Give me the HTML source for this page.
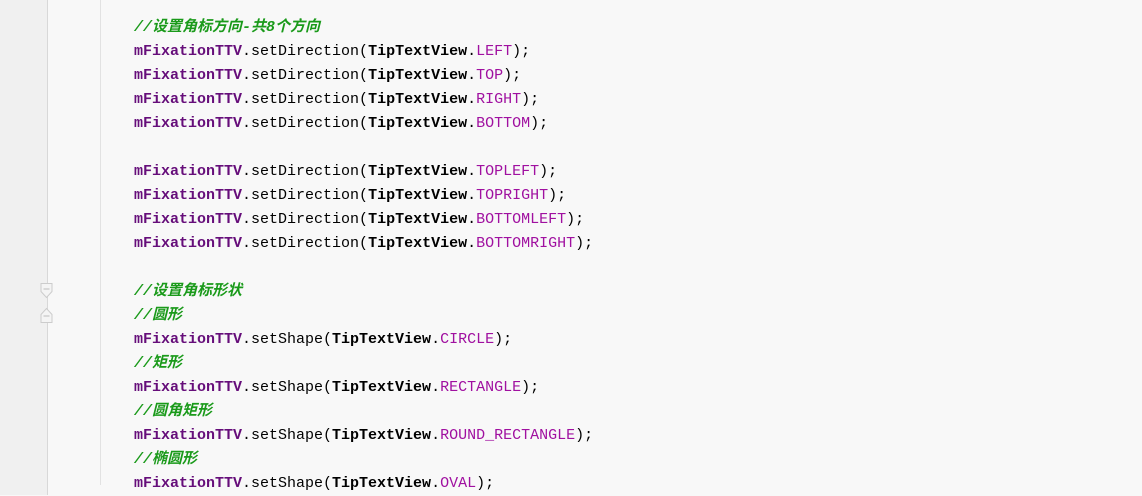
<!DOCTYPE html>
<html><head><meta charset="utf-8"><style>
html,body{margin:0;padding:0}
body{width:1142px;height:495px;background:#f8f8f8;position:relative;overflow:hidden;font-family:"Liberation Mono","Noto Sans CJK SC",monospace;font-size:15px}
.gut{position:absolute;left:0;top:0;width:47px;height:495px;background:#f0f0f0;border-right:1px solid #d8d8d8}
.guide{position:absolute;left:100px;top:0;width:1px;height:485px;background:#e2e2e2}
.code{position:absolute;left:134px;top:16px;color:#000}
.code div{height:24px;line-height:24px;white-space:pre;overflow:visible}
.c{color:#1a9a1a;font-weight:bold;font-style:italic}
.f{color:#660e7a;font-weight:bold}
.k{color:#a010a0}
.b{font-weight:bold}
</style></head><body>
<div class="gut"></div>
<svg style="position:absolute;left:40px;top:283px" width="14" height="40"><path d="M1 0.5h11v8l-5.5 6l-5.5-6z" fill="#f4f4f4" stroke="#ccc"/><path d="M3.5 6h6" stroke="#bbb"/><path d="M1 39.5h11v-8l-5.5-6l-5.5 6z" fill="#f4f4f4" stroke="#ccc"/><path d="M3.5 33h6" stroke="#bbb"/></svg>
<div class="guide"></div>
<div class="code">
<div><span class="c">//设置角标方向-共8个方向</span></div>
<div><span class="f">mFixationTTV</span>.setDirection(<span class="b">TipTextView</span>.<span class="k">LEFT</span>);</div>
<div><span class="f">mFixationTTV</span>.setDirection(<span class="b">TipTextView</span>.<span class="k">TOP</span>);</div>
<div><span class="f">mFixationTTV</span>.setDirection(<span class="b">TipTextView</span>.<span class="k">RIGHT</span>);</div>
<div><span class="f">mFixationTTV</span>.setDirection(<span class="b">TipTextView</span>.<span class="k">BOTTOM</span>);</div>
<div></div>
<div><span class="f">mFixationTTV</span>.setDirection(<span class="b">TipTextView</span>.<span class="k">TOPLEFT</span>);</div>
<div><span class="f">mFixationTTV</span>.setDirection(<span class="b">TipTextView</span>.<span class="k">TOPRIGHT</span>);</div>
<div><span class="f">mFixationTTV</span>.setDirection(<span class="b">TipTextView</span>.<span class="k">BOTTOMLEFT</span>);</div>
<div><span class="f">mFixationTTV</span>.setDirection(<span class="b">TipTextView</span>.<span class="k">BOTTOMRIGHT</span>);</div>
<div></div>
<div><span class="c">//设置角标形状</span></div>
<div><span class="c">//圆形</span></div>
<div><span class="f">mFixationTTV</span>.setShape(<span class="b">TipTextView</span>.<span class="k">CIRCLE</span>);</div>
<div><span class="c">//矩形</span></div>
<div><span class="f">mFixationTTV</span>.setShape(<span class="b">TipTextView</span>.<span class="k">RECTANGLE</span>);</div>
<div><span class="c">//圆角矩形</span></div>
<div><span class="f">mFixationTTV</span>.setShape(<span class="b">TipTextView</span>.<span class="k">ROUND_RECTANGLE</span>);</div>
<div><span class="c">//椭圆形</span></div>
<div><span class="f">mFixationTTV</span>.setShape(<span class="b">TipTextView</span>.<span class="k">OVAL</span>);</div>
</div>
</body></html>
